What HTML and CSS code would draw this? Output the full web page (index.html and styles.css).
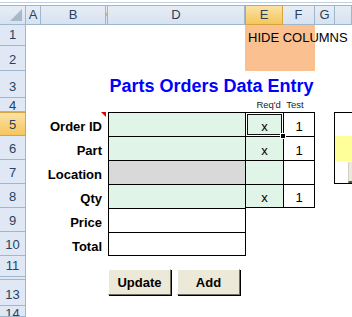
FILE: index.html
```html
<!DOCTYPE html>
<html lang="en">

<head>
    <meta charset="UTF-8">
    <meta name="viewport" content="width=device-width, initial-scale=1.0">
    <title>Parts Orders Data Entry</title>
    <link rel="stylesheet" href="styles.css">
</head>

<body>
    <div class="topbar"></div>
    <div class="sheet">
        <!-- column headers -->
        <div class="corner"><span class="corner-tri"></span></div>
        <div class="ch">A</div>
        <div class="ch">B</div>
        <div class="ch clip">C</div>
        <div class="ch">D</div>
        <div class="ch sel">E</div>
        <div class="ch">F</div>
        <div class="ch">G</div>
        <div class="ch"></div>

        <!-- row headers -->
        <div class="rh r1">1</div>
        <div class="rh r2">2</div>
        <div class="rh r3">3</div>
        <div class="rh r4">4</div>
        <div class="rh r5 sel">5</div>
        <div class="rh r6">6</div>
        <div class="rh r7">7</div>
        <div class="rh r8">8</div>
        <div class="rh r9">9</div>
        <div class="rh r10">10</div>
        <div class="rh r11">11</div>
        <div class="rh r12">12</div>
        <div class="rh r13">13</div>
        <div class="rh r14">14</div>

        <!-- hide columns note -->
        <div class="hide-fill"></div>
        <div class="hide-text">HIDE COLUMNS</div>

        <div class="title">Parts Orders Data Entry</div>
        <div class="colnote">Req'd&nbsp;&nbsp;Test</div>

        <!-- labels -->
        <div class="label r5">Order ID<span class="comment"></span></div>
        <div class="label r6">Part</div>
        <div class="label r7">Location</div>
        <div class="label r8">Qty</div>
        <div class="label r9">Price</div>
        <div class="label r10">Total</div>

        <!-- input column -->
        <div class="cell cd r5 top green"></div>
        <div class="cell cd r6 green"></div>
        <div class="cell cd r7 grey"></div>
        <div class="cell cd r8 green"></div>
        <div class="cell cd r9"></div>
        <div class="cell cd r10 last"></div>

        <!-- required flags -->
        <div class="cell ce r5 top green active">x<span class="handle"></span></div>
        <div class="cell ce r6 green">x</div>
        <div class="cell ce r7 green"></div>
        <div class="cell ce r8 green last">x</div>
        <div class="edge ce r9"></div>
        <div class="edge ce r10"></div>

        <!-- test column -->
        <div class="cell cf r5 top">1</div>
        <div class="cell cf r6">1</div>
        <div class="cell cf r7"></div>
        <div class="cell cf r8 last">1</div>

        <!-- side box -->
        <div class="sidebox">
            <div class="side-gap"></div>
            <div class="side-yellow"></div>
            <div class="side-foot"><span class="side-btn"></span></div>
        </div>

        <div class="buttons">
            <button class="btn">Update</button>
            <button class="btn">Add</button>
        </div>
    </div>
</body>

</html>
```

FILE: styles.css
```css
body {
    margin: 0;
    padding: 0;
    width: 352px;
    height: 317px;
    overflow: hidden;
    background: #fff;
    font-family: "Liberation Sans", Arial, sans-serif;
    font-size: 13px;
    color: #000;
}
.topbar {
    height: 5px;
    background: linear-gradient(#fff 0, #fff 2px, #c3d0df 2px, #c3d0df 3px, #fff 3px);
}
.sheet {
    display: grid;
    grid-template-columns: 26px 15px 65px 2px 137px 38px 32px 20px 1fr;
    grid-template-rows: 20px 21px 25px 27px 14px 24px 24px 24px 24px 24px 24px 21px 3px 26px 1fr;
    height: 312px;
}

/* headers */
.corner, .ch {
    grid-row: 1;
    box-sizing: border-box;
    background: linear-gradient(#e6edf6, #d7e2f0);
    border-right: 1px solid #9eb6ce;
    border-bottom: 1px solid #9eb6ce;
    border-top: 1px solid #9eb6ce;
}
.corner {
    grid-column: 1;
    position: relative;
}
.corner-tri {
    position: absolute;
    right: 3px;
    bottom: 3px;
    border-left: 12px solid transparent;
    border-bottom: 12px solid #a9b8c9;
}
.ch {
    text-align: center;
    line-height: 18px;
    color: #27415f;
    overflow: hidden;
    white-space: nowrap;
}
.ch.clip {
    text-align: left;
    text-indent: 0;
}
.ch.sel, .rh.sel {
    background: linear-gradient(#fbe2a6, #f5c65c);
    border-color: #d6a53e;
}
.ch.sel {
    border-left: 1px solid #d6a53e;
}
.rh {
    grid-column: 1;
    box-sizing: border-box;
    background: #dfe8f4;
    border-right: 1px solid #9eb6ce;
    border-bottom: 1px solid #9eb6ce;
    color: #27415f;
    text-align: center;
    line-height: 15px;
    overflow: hidden;
    display: flex;
    align-items: flex-end;
    justify-content: center;
    padding-bottom: 3px;
}
.rh.sel {
    border-top: 1px solid #d6a53e;
}
.r4.rh, .r12.rh, .r14.rh {
    align-items: flex-start;
    padding-bottom: 0;
}

.r1 { grid-row: 2; }
.r2 { grid-row: 3; }
.r3 { grid-row: 4; }
.r4 { grid-row: 5; }
.r5 { grid-row: 6; }
.r6 { grid-row: 7; }
.r7 { grid-row: 8; }
.r8 { grid-row: 9; }
.r9 { grid-row: 10; }
.r10 { grid-row: 11; }
.r11 { grid-row: 12; }
.r12 { grid-row: 13; }
.r13 { grid-row: 14; }
.r14 { grid-row: 15; }

/* hide columns note */
.hide-fill {
    grid-column: 6 / 8;
    grid-row: 2 / 4;
    background: #fac090;
}
.hide-text {
    grid-column: 6;
    grid-row: 2;
    align-self: end;
    white-space: nowrap;
    line-height: 15px;
    padding: 0 0 1px 3px;
}

.title {
    grid-column: 5 / 8;
    grid-row: 4;
    align-self: end;
    text-align: center;
    color: #0000ff;
    font-weight: bold;
    font-size: 18px;
    line-height: 20px;
    padding-bottom: 2px;
    white-space: nowrap;
}
.colnote {
    grid-column: 6 / 8;
    grid-row: 5;
    align-self: end;
    text-align: center;
    font-size: 9.5px;
    line-height: 11px;
    padding-bottom: 2px;
    color: #222;
    white-space: nowrap;
}

/* labels */
.label {
    grid-column: 3;
    position: relative;
    font-weight: bold;
    text-align: right;
    align-self: stretch;
    display: flex;
    align-items: flex-end;
    justify-content: flex-end;
    line-height: 15px;
    padding: 0 4px 2px 0;
}
.comment {
    position: absolute;
    top: 0;
    right: 0;
    border-left: 5px solid transparent;
    border-top: 5px solid #e00000;
}

/* data cells */
.cell {
    box-sizing: border-box;
    border-left: 1px solid #000;
    border-top: 1px solid #000;
    display: flex;
    align-items: flex-end;
    justify-content: center;
    line-height: 15px;
    padding-bottom: 2px;
}
.cell.last {
    border-bottom: 1px solid #000;
}
.cd { grid-column: 5; }
.ce { grid-column: 6; }
.cf {
    grid-column: 7;
    border-right: 1px solid #000;
}
.edge {
    box-sizing: border-box;
    border-left: 1px solid #000;
}
.green { background: #e0f4e7; }
.grey { background: #d9d9d9; }
.active {
    position: relative;
    box-shadow: inset 0 0 0 1px #fff, inset 0 0 0 2px #111;
}
.handle {
    position: absolute;
    right: -3px;
    bottom: -3px;
    width: 4px;
    height: 4px;
    background: #000;
    border: 1px solid #fff;
}

/* box on the right */
.sidebox {
    grid-column: 9;
    grid-row: 6 / 9;
    margin-left: -1px;
    border: 1px solid #000;
    border-right: none;
    display: flex;
    flex-direction: column;
}
.side-gap {
    height: 23px;
}
.side-yellow {
    height: 25px;
    background: #ffff99;
}
.side-foot {
    flex: 1;
    padding: 1px 0 0 13px;
    display: flex;
}
.side-btn {
    flex: 1;
    background: #ece9d8;
    border-left: 1px solid #d4d0c8;
    border-bottom: 2px solid #555;
}

/* buttons */
.buttons {
    grid-column: 5 / 8;
    grid-row: 12 / 15;
    align-self: start;
    margin-top: 13px;
    display: flex;
    gap: 6px;
}
.btn {
    width: 63px;
    height: 26px;
    padding: 0;
    background: #ece9d8;
    border: none;
    border-top: 1px solid #fff;
    border-left: 1px solid #fff;
    border-right: 1px solid #716f64;
    border-bottom: 1px solid #716f64;
    box-shadow: 1px 1px 0 #000;
    font-family: "Liberation Sans", Arial, sans-serif;
    font-size: 13px;
    font-weight: bold;
    color: #000;
}
```
